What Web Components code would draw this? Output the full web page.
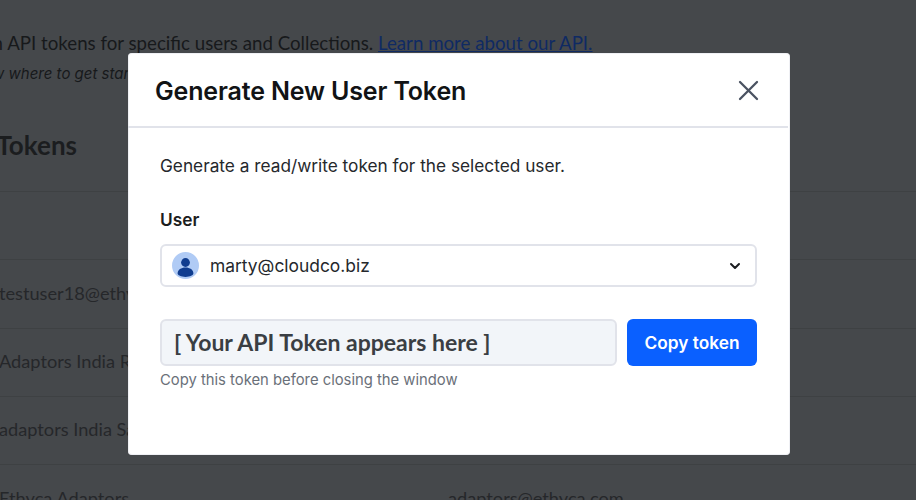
<!DOCTYPE html>
<html><head><meta charset="utf-8"><style>
html,body{margin:0;padding:0;width:916px;height:500px;overflow:hidden;background:#45484b}
body{position:relative;font-family:"Inter","Liberation Sans",sans-serif}
</style></head><body>
<template id="t-bg"><style>
:host{display:block;width:916px;height:500px;overflow:hidden;background:#45484b;color:#17191b;font-family:Lato,"Liberation Sans",sans-serif}
.intro{padding:33px 0 0 0;margin-left:-69px;white-space:nowrap;font-size:18.7px;line-height:20px;height:20px}
a{color:#0f2a63;text-decoration:underline}
.hint{margin-left:-90px;margin-top:12px;font:italic 15px/18px Inter,"Liberation Sans",sans-serif;height:18px;white-space:nowrap}
h2{margin:46px 0 0 -51px;font-size:26px;line-height:32px;height:32px;font-weight:700;color:#1b1d1f}
.rows{margin-top:30px;border-top:1px solid #3e4143}
</style>
<div class="intro">Maintain API tokens for specific users and Collections. <a>Learn more about our API.</a></div>
<div class="hint">Not sure how where to get started</div>
<h2>API Tokens</h2>
<div class="rows"><slot></slot></div></template>
<template id="t-row"><style>
:host{display:flex;height:68.25px;box-sizing:border-box;border-bottom:1px solid #3e4143;padding-bottom:2px;align-items:center;white-space:nowrap;font-size:18.2px;color:#25272a;font-family:Lato,"Liberation Sans",sans-serif;overflow:hidden}
.a{width:449px;margin-left:-1px;flex:none}
</style><span class="a"><slot></slot></span><span><slot name="b"></slot></span></template>
<template id="t-modal"><style>
:host{position:absolute;left:128px;top:53px;width:662px;height:402px;box-sizing:border-box;background:#fff;border-radius:4px;color:#1b1d20;box-shadow:0 0 0 1px rgba(225,228,235,.55) inset;display:flex;flex-direction:column;font-family:Inter,"Liberation Sans",sans-serif;overflow:hidden}
header{height:75px;box-sizing:border-box;border-bottom:2px solid #e1e3ea;margin-right:2px;display:flex;align-items:center;justify-content:space-between;padding:2px 29px 0 27px;flex:none}
h1{margin:0;font-size:25px;font-weight:600;letter-spacing:-.15px;color:#111315}
svg{display:block}
.body{padding:26px 33px 0 32px;display:flex;flex-direction:column}
</style><header><h1>Generate New User Token</h1>
<svg width="21" height="21" viewBox="0 0 21 21" fill="none" stroke="#4a5261" stroke-width="2.3" stroke-linecap="round"><path d="M2 2 19 19M19 2 2 19"/></svg></header>
<div class="body"><slot></slot></div></template>
<template id="t-select"><style>
:host{display:flex;align-items:center;height:43px;box-sizing:border-box;border:2px solid #e1e3ea;border-radius:6px;padding:0 14px 0 10px;font-size:17.4px;color:#25282c;gap:11px}
span{flex:1}
</style>
<svg width="27" height="27" viewBox="0 0 27 27"><circle cx="13.5" cy="13.5" r="13.5" fill="#b0cbf5"/><circle cx="13.5" cy="10.5" r="4.4" fill="#0f3c8f"/><path d="M5.6 21.6c0-4 3.5-6.2 7.9-6.2s7.9 2.2 7.9 6.2c0 1.6-3.4 3.4-7.9 3.4s-7.9-1.8-7.9-3.4z" fill="#0f3c8f"/></svg>
<span><slot></slot></span>
<svg width="12" height="8" viewBox="0 0 12 8" fill="none" stroke="#1b1d20" stroke-width="2" stroke-linecap="round" stroke-linejoin="round"><path d="M2 2 6 6 10 2"/></svg></template>
<template id="t-token"><style>
:host{display:flex;gap:10px;margin-top:32px}
.f{width:457px;height:47px;box-sizing:border-box;background:#f2f5f9;border:2px solid #e1e3ea;border-radius:6px;display:flex;align-items:center;padding:0 12px 2px;font:700 23px Lato,"Noto Sans",sans-serif;color:#3a3e43;white-space:nowrap}
button{width:130px;height:47px;border:0;border-radius:6px;background:#0a60ff;color:#fff;font:600 17.3px Inter,"Liberation Sans",sans-serif;padding:0}
</style><div class="f"><slot></slot></div><button>Copy token</button></template>
<template id="t-text"><style>:host{display:block}</style><slot></slot></template>

<bg-page>
<bg-row></bg-row>
<bg-row>testuser18@ethyca.com</bg-row>
<bg-row>Adaptors India Region</bg-row>
<bg-row>adaptors India Sales</bg-row>
<bg-row>Ethyca Adaptors<span slot="b">adaptors@ethyca.com</span></bg-row>
</bg-page>
<token-modal>
<ui-text style="font-size:17.25px;line-height:24px;color:#25282c">Generate a read/write token for the selected user.</ui-text>
<ui-text style="font-size:17.3px;font-weight:600;line-height:24px;margin-top:30px;margin-bottom:12px;color:#1b1d20">User</ui-text>
<user-select>marty@cloudco.biz</user-select>
<token-field>[ Your API Token appears here ]</token-field>
<ui-text style="font-size:14.8px;line-height:20px;margin-top:4px;color:#6a7079">Copy this token before closing the window</ui-text>
</token-modal>
<script>
const def=(n,t)=>customElements.define(n,class extends HTMLElement{constructor(){super();this.attachShadow({mode:'open'}).append(document.getElementById(t).content.cloneNode(true))}});
def('bg-page','t-bg');def('bg-row','t-row');def('token-modal','t-modal');def('user-select','t-select');def('token-field','t-token');def('ui-text','t-text');
</script>
</body></html>
